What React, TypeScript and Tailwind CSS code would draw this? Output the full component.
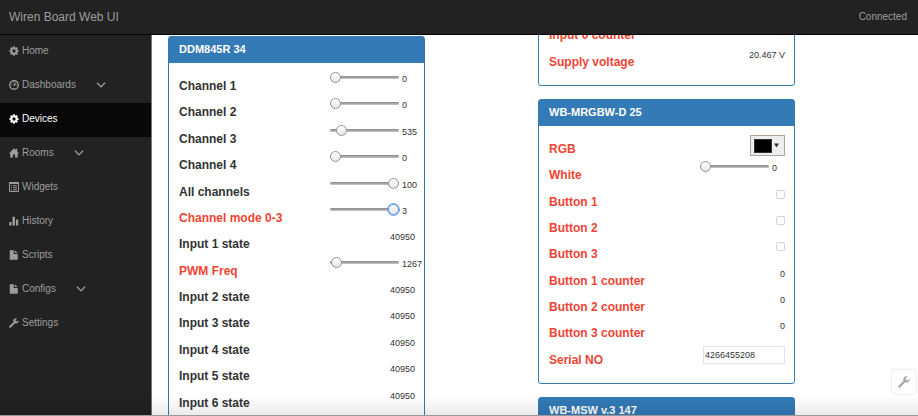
import React from "react";
import clsx from "clsx";

type Control =
  | { kind: "range"; value: number; max: number; focused?: boolean }
  | { kind: "text"; value: string }
  | { kind: "color" }
  | { kind: "switch" }
  | { kind: "input"; value: string };

interface Cell {
  name: string;
  error?: boolean;
  control: Control;
}

const CogIcon = () => (
  <svg viewBox="0 0 20 20" className="size-[10px]" fill="none" stroke="currentColor" aria-hidden="true">
    <circle cx="10" cy="10" r="5.300" strokeWidth="4" />
    <path
      d="M10 0.500v4M10 15.500v4M0.500 10h4M15.500 10h4M3.300 3.300l2.800 2.800M13.900 13.900l2.800 2.800M3.300 16.700l2.800-2.800M13.900 6.100l2.800-2.800"
      strokeWidth="3.400"
    />
  </svg>
);

const HomeIcon = () => (
  <svg viewBox="0 0 20 20" className="size-[10px]" fill="currentColor" aria-hidden="true">
    <path d="M10 0.500 L13.500 4 V1.500 H16.500 V7 L20 11 H17.500 V19 H12 V13 H8 V19 H2.500 V11 H0 Z" />
  </svg>
);

const DashboardIcon = () => (
  <svg viewBox="0 0 20 20" className="size-[10px]" fill="none" stroke="currentColor" strokeWidth="2.700" aria-hidden="true">
    <circle cx="10" cy="10" r="8.500" />
    <path d="M9.500 11.500 L13.500 6.500" />
    <path d="M4.500 10h1.600M13.900 10h1.600M6.300 6.300l1 1M10 4.200v1.500" strokeWidth="1.600" />
  </svg>
);

const ListIcon = () => (
  <svg viewBox="0 0 20 20" className="size-[10px]" fill="none" stroke="currentColor" aria-hidden="true">
    <path d="M1 1h18v18H1z" strokeWidth="2" />
    <path d="M1 2.500h18" strokeWidth="3" />
    <path d="M4 7.500h2M8 7.500h8M4 11.500h2M8 11.500h8M4 15.500h2M8 15.500h8" strokeWidth="2" />
  </svg>
);

const StatsIcon = () => (
  <svg viewBox="0 0 20 20" className="size-[10px]" fill="currentColor" aria-hidden="true">
    <path d="M0.500 12H5v7H0.500zM7 1.500h5V19H7zM14 7h4.500v12H14z" />
  </svg>
);

const FileIcon = () => (
  <svg viewBox="0 0 20 20" className="size-[10px]" fill="currentColor" aria-hidden="true">
    <path d="M1.500 0.500H9.500V8H17.500V19.500H1.500z" />
    <path d="M11.500 0.500L17.500 6.200H11.500z" />
  </svg>
);

const WrenchIcon = ({ className = "size-[10px]" }: { className?: string }) => (
  <svg viewBox="0 0 20 20" className={className} fill="currentColor" aria-hidden="true">
    <path d="M19.700 5.200 L16.200 7.200 L13.200 6.200 L13 3.400 L16.300 1 C13.600 -0.300 10.500 0.700 9.200 3.200 C8.400 4.800 8.500 6.400 9.200 7.800 L0.800 16.200 C-0.800 17.900 1.700 20.800 3.700 19 L11.900 10.600 C15.500 12 20 9.600 19.700 5.200 Z" />
  </svg>
);

const Chevron = () => (
  <svg viewBox="0 0 10 6" className="h-[6px] w-[10px]" fill="none" stroke="currentColor" strokeWidth="1.300" aria-hidden="true">
    <path d="M1 0.700 L5 4.900 L9 0.700" />
  </svg>
);

const navItems = [
  { title: "Home", icon: <CogIcon /> },
  { title: "Dashboards", icon: <DashboardIcon />, expandable: true },
  { title: "Devices", icon: <CogIcon />, active: true },
  { title: "Rooms", icon: <HomeIcon />, expandable: true },
  { title: "Widgets", icon: <ListIcon /> },
  { title: "History", icon: <StatsIcon /> },
  { title: "Scripts", icon: <FileIcon /> },
  { title: "Configs", icon: <FileIcon />, expandable: true },
  { title: "Settings", icon: <WrenchIcon /> },
];

const inputState = (n: number): Cell => ({
  name: `Input ${n} state`,
  control: { kind: "text", value: "40950" },
});

const inputCells: Cell[] = [
  { name: "Input 0 counter", error: true, control: { kind: "text", value: "" } },
  { name: "Supply voltage", error: true, control: { kind: "text", value: "20.467 V" } },
];

const ddmCells: Cell[] = [
  { name: "Channel 1", control: { kind: "range", value: 0, max: 5000 } },
  { name: "Channel 2", control: { kind: "range", value: 0, max: 5000 } },
  { name: "Channel 3", control: { kind: "range", value: 535, max: 5000 } },
  { name: "Channel 4", control: { kind: "range", value: 0, max: 5000 } },
  { name: "All channels", control: { kind: "range", value: 100, max: 100 } },
  { name: "Channel mode 0-3", error: true, control: { kind: "range", value: 3, max: 3, focused: true } },
  inputState(1),
  { name: "PWM Freq", error: true, control: { kind: "range", value: 1267, max: 65535 } },
  inputState(2),
  inputState(3),
  inputState(4),
  inputState(5),
  inputState(6),
];

const mrgbwCells: Cell[] = [
  { name: "RGB", error: true, control: { kind: "color" } },
  { name: "White", error: true, control: { kind: "range", value: 0, max: 255 } },
  { name: "Button 1", error: true, control: { kind: "switch" } },
  { name: "Button 2", error: true, control: { kind: "switch" } },
  { name: "Button 3", error: true, control: { kind: "switch" } },
  { name: "Button 1 counter", error: true, control: { kind: "text", value: "0" } },
  { name: "Button 2 counter", error: true, control: { kind: "text", value: "0" } },
  { name: "Button 3 counter", error: true, control: { kind: "text", value: "0" } },
  { name: "Serial NO", error: true, control: { kind: "input", value: "4266455208" } },
];

const rangeClasses =
  "h-[11px] w-[69px] shrink-0 appearance-none bg-transparent outline-none " +
  "[&::-webkit-slider-runnable-track]:h-[3px] [&::-webkit-slider-runnable-track]:rounded-full [&::-webkit-slider-runnable-track]:bg-linear-to-b [&::-webkit-slider-runnable-track]:from-[#858585] [&::-webkit-slider-runnable-track]:to-[#c8c8c8] " +
  "[&::-webkit-slider-thumb]:-mt-1 [&::-webkit-slider-thumb]:size-[11px] [&::-webkit-slider-thumb]:appearance-none [&::-webkit-slider-thumb]:rounded-full [&::-webkit-slider-thumb]:border [&::-webkit-slider-thumb]:bg-linear-to-b [&::-webkit-slider-thumb]:from-white [&::-webkit-slider-thumb]:to-[#e6e6e6]";

const idleThumb = "[&::-webkit-slider-thumb]:border-[#959595]";
const focusedThumb =
  "[&::-webkit-slider-thumb]:border-[#5b93e0] [&::-webkit-slider-thumb]:shadow-[0_0_0_1px_#79aaf0]";

function CellControl({ id, control }: { id: string; control: Control }) {
  switch (control.kind) {
    case "range":
      return (
        <div className="flex h-[11px] w-[85px] items-start gap-[3px]">
          <input
            id={id}
            type="range"
            min={0}
            max={control.max}
            defaultValue={control.value}
            className={clsx(rangeClasses, control.focused ? focusedThumb : idleThumb)}
          />
          <output htmlFor={id} className="pt-px">{control.value}</output>
        </div>
      );
    case "text":
      return <output id={id} className="pt-px">{control.value}</output>;
    case "color":
      return (
        <button
          id={id}
          type="button"
          className="flex h-[21px] w-[35px] items-center justify-between border border-[#b3a394] bg-[#eee] pr-[5px] pl-[3px]"
        >
          <span className="h-[14px] w-[18px] border border-[#333] bg-black" />
          <svg viewBox="0 0 6 5" className="h-[5px] w-[5px]" fill="#333" aria-hidden="true">
            <path d="M0 0h6L3 5z" />
          </svg>
        </button>
      );
    case "switch":
      return (
        <input
          id={id}
          type="checkbox"
          className="mt-[2px] size-[9px] appearance-none rounded-[2px] border border-[#d4d4d4] bg-white checked:bg-[#337ab7]"
        />
      );
    case "input":
      return (
        <input
          id={id}
          type="text"
          defaultValue={control.value}
          className="h-[18px] w-[82px] border border-[#e2e2e2] bg-white px-px outline-none"
        />
      );
  }
}

function CellRow({ prefix, cell }: { prefix: string; cell: Cell }) {
  const id = `${prefix}-${cell.name.replace(/\s+/g, "-").toLowerCase()}`;
  return (
    <div className="flex items-start justify-between">
      <label
        htmlFor={id}
        className={clsx("pt-[6px] text-[12px] leading-4 font-bold", cell.error ? "text-[#f04434]" : "text-[#333]")}
      >
        {cell.name}
      </label>
      <div className="flex text-[9px] leading-3 text-[#333]">
        <CellControl id={id} control={cell.control} />
      </div>
    </div>
  );
}

function Panel({ title, children }: { title: string; children?: React.ReactNode }) {
  return (
    <section className="rounded-[3px] border border-[#337ab7] bg-white">
      <h3 className="bg-[#337ab7] px-[10px] pt-1 pb-[6px] text-[11px] leading-4 font-bold text-white">{title}</h3>
      <div className="pt-[9px] pr-[9px] pb-[11px] pl-[10px]">{children}</div>
    </section>
  );
}

export default function App() {
  return (
    <div className="flex h-screen flex-col overflow-hidden bg-white font-['Liberation_Sans',Arial,sans-serif] text-[#333]">
      <header className="flex h-[35px] shrink-0 items-center justify-between border-b border-[#080808] bg-[#222] pr-[11px] pl-[9px] text-[#9d9d9d]">
        <a href="#/" className="text-[12px] leading-4">Wiren Board Web UI</a>
        <span className="text-[10px] leading-4">Connected</span>
      </header>

      <div className="flex min-h-0 flex-1">
        <nav className="w-[152px] shrink-0 border-r border-[#777] bg-[#222]">
          <ul>
            {navItems.map((item) => (
              <li key={item.title}>
                <a
                  href={`#/${item.title.toLowerCase()}`}
                  className={clsx(
                    "flex h-[34px] items-center pb-[2px] pl-[9px] text-[10px] leading-4",
                    item.active ? "bg-[#080808] text-white" : "text-[#9d9d9d]"
                  )}
                >
                  <span className="flex w-[13px] items-center">{item.icon}</span>
                  {item.title}
                  {item.expandable && (
                    <span className="pl-5">
                      <Chevron />
                    </span>
                  )}
                </a>
              </li>
            ))}
          </ul>
        </nav>

        <main className="grid min-w-0 flex-1 grid-cols-2 items-start gap-x-[113px] overflow-hidden pr-[123px] pl-4">
          <div className="pt-px">
            <Panel title="DDM845R 34">
              <div className="grid min-h-[343px] auto-rows-fr">
                {ddmCells.map((cell) => (
                  <CellRow key={cell.name} prefix="ddm845r" cell={cell} />
                ))}
              </div>
            </Panel>
          </div>

          <div className="-mt-[24px] flex flex-col gap-[13px]">
            <section className="rounded-[3px] border border-[#337ab7] bg-white pt-[9px] pr-[9px] pb-[11px] pl-[10px]">
              <div className="grid min-h-[53px] auto-rows-fr">
                {inputCells.map((cell) => (
                  <CellRow key={cell.name} prefix="wb-in" cell={cell} />
                ))}
              </div>
            </section>

            <Panel title="WB-MRGBW-D 25">
              <div className="grid min-h-[237px] auto-rows-fr">
                {mrgbwCells.map((cell) => (
                  <CellRow key={cell.name} prefix="wb-mrgbw" cell={cell} />
                ))}
              </div>
            </Panel>

            <Panel title="WB-MSW v.3 147" />
          </div>
        </main>
      </div>

      <button
        type="button"
        aria-label="Edit"
        className="fixed right-[1px] bottom-[21px] flex size-[26px] items-center justify-center rounded-[3px] border border-[#eee] bg-white text-[#aaa]"
      >
        <WrenchIcon className="size-3" />
      </button>

      <div className="pointer-events-none fixed inset-x-0 bottom-0 h-5 border-b border-[#999] bg-linear-to-b from-transparent to-black/8" />
    </div>
  );
}
